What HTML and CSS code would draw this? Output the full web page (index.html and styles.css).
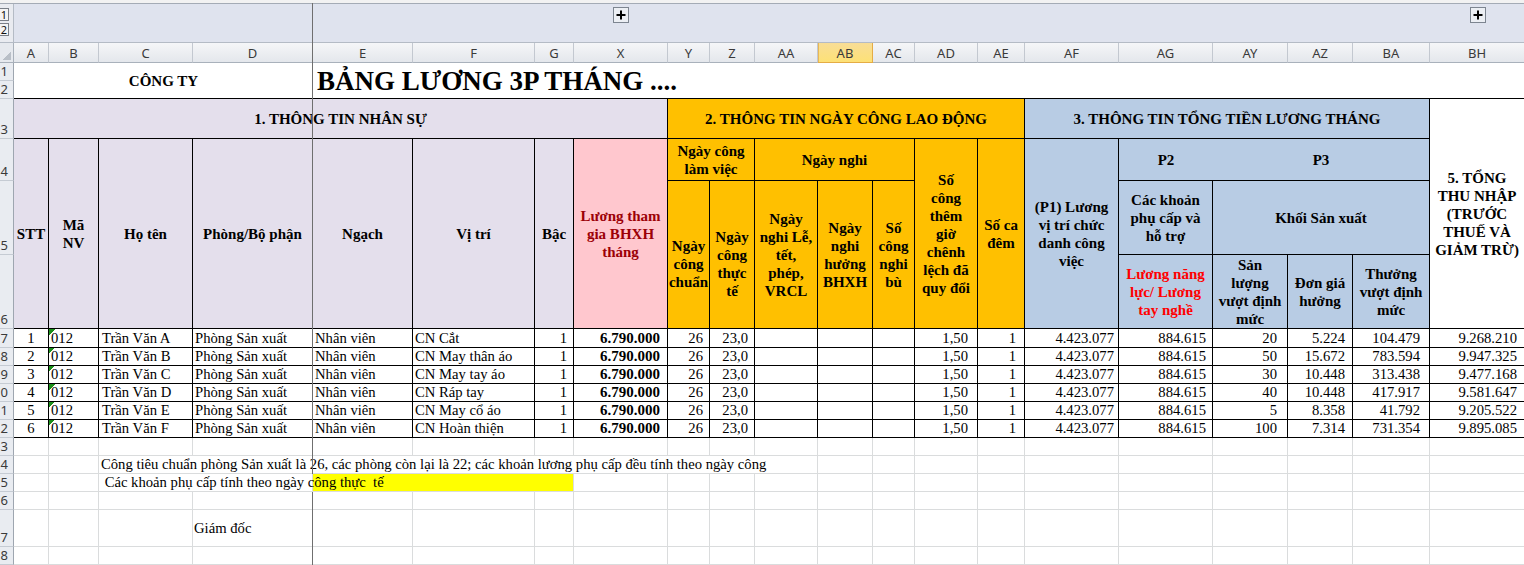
FILE: index.html
```html
<!DOCTYPE html>
<html lang="vi">
<head>
<meta charset="utf-8">
<title>Bảng lương 3P</title>
<link rel="stylesheet" href="styles.css">
</head>
<body>
<div class="sheet">
  <div class="tabs"></div>
  <div class="outline">
    <div class="levels"><span class="lvl">1</span><span class="lvl">2</span></div>
    <div class="plus px"><svg width="16" height="16" viewBox="0 0 16 16"><rect x="0.5" y="0.5" width="15" height="15" fill="#eceff4" stroke="#7d8590"/><path d="M3.5 8h9M8 3.5v9" stroke="#000" stroke-width="2"/></svg></div>
    <div class="plus ph"><svg width="16" height="16" viewBox="0 0 16 16"><rect x="0.5" y="0.5" width="15" height="15" fill="#eceff4" stroke="#7d8590"/><path d="M3.5 8h9M8 3.5v9" stroke="#000" stroke-width="2"/></svg></div>
  </div>
  <div class="colhdr">
    <div class="corner"></div>
    <div class="ch">A</div><div class="ch">B</div><div class="ch">C</div><div class="ch">D</div><div class="ch">E</div><div class="ch">F</div><div class="ch">G</div><div class="ch">X</div><div class="ch">Y</div><div class="ch">Z</div><div class="ch">AA</div><div class="ch sel">AB</div><div class="ch">AC</div><div class="ch">AD</div><div class="ch">AE</div><div class="ch">AF</div><div class="ch">AG</div><div class="ch">AY</div><div class="ch">AZ</div><div class="ch">BA</div><div class="ch">BH</div>
  </div>
  <div class="head">
    <div class="rh h1">1</div>
    <div class="rh h2">2</div>
    <div class="rh h3">3</div>
    <div class="rh h4">4</div>
    <div class="rh h5">5</div>
    <div class="rh h6">6</div>
    <div class="hc co">CÔNG TY</div>
    <div class="hc ti">BẢNG LƯƠNG 3P THÁNG ....</div>
    <div class="hc lav s1">1. THÔNG TIN NHÂN SỰ</div>
    <div class="hc org s2">2. THÔNG TIN NGÀY CÔNG LAO ĐỘNG</div>
    <div class="hc blu s3">3. THÔNG TIN TỔNG TIỀN LƯƠNG THÁNG</div>
    <div class="hc tn">5. TỔNG<br>THU NHẬP<br>(TRƯỚC<br>THUẾ VÀ<br>GIẢM TRỪ)</div>
    <div class="hc lav stt">STT</div>
    <div class="hc lav ma">Mã<br>NV</div>
    <div class="hc lav ht">Họ tên</div>
    <div class="hc lav pb">Phòng/Bộ phận</div>
    <div class="hc lav ngh">Ngạch</div>
    <div class="hc lav vt">Vị trí</div>
    <div class="hc lav bac">Bậc</div>
    <div class="hc bad lg">Lương tham<br>gia BHXH<br>tháng</div>
    <div class="hc org nclv">Ngày công<br>làm việc</div>
    <div class="hc org nn">Ngày nghi</div>
    <div class="hc org sc">Số<br>công<br>thêm<br>giờ<br>chênh<br>lệch đã<br>quy đổi</div>
    <div class="hc org scd">Số ca<br>đêm</div>
    <div class="hc blu p1">(P1) Lương<br>vị trí chức<br>danh công<br>việc</div>
    <div class="hc blu p2">P2</div>
    <div class="hc blu p3">P3</div>
    <div class="hc org ncc shift">Ngày<br>công<br>chuẩn</div>
    <div class="hc org nctt shift">Ngày<br>công<br>thực<br>tế</div>
    <div class="hc org nnl">Ngày<br>nghi Lễ,<br>tết,<br>phép,<br>VRCL</div>
    <div class="hc org nnb">Ngày<br>nghi<br>hưởng<br>BHXH</div>
    <div class="hc org scb">Số<br>công<br>nghi<br>bù</div>
    <div class="hc blu ckpc">Các khoản<br>phụ cấp và<br>hỗ trợ</div>
    <div class="hc blu kh">Khối Sản xuất</div>
    <div class="hc blu lnl">Lương năng<br>lực/ Lương<br>tay nghề</div>
    <div class="hc blu sl">Sản<br>lượng<br>vượt định<br>mức</div>
    <div class="hc blu dg">Đơn giá<br>hưởng</div>
    <div class="hc blu tv">Thưởng<br>vượt định<br>mức</div>
  </div>

  <div class="dr first">
    <div class="rh">7</div><div>1</div><div>012</div><div>Trần Văn A</div><div>Phòng Sản xuất</div><div>Nhân viên</div><div>CN Cắt</div><div>1</div><div>6.790.000</div><div>26</div><div>23,0</div><div></div><div></div><div></div><div>1,50</div><div>1</div><div>4.423.077</div><div>884.615</div><div>20</div><div>5.224</div><div>104.479</div><div>9.268.210</div>
  </div>
  <div class="dr">
    <div class="rh">8</div><div>2</div><div>012</div><div>Trần Văn B</div><div>Phòng Sản xuất</div><div>Nhân viên</div><div>CN May thân áo</div><div>1</div><div>6.790.000</div><div>26</div><div>23,0</div><div></div><div></div><div></div><div>1,50</div><div>1</div><div>4.423.077</div><div>884.615</div><div>50</div><div>15.672</div><div>783.594</div><div>9.947.325</div>
  </div>
  <div class="dr">
    <div class="rh">9</div><div>3</div><div>012</div><div>Trần Văn C</div><div>Phòng Sản xuất</div><div>Nhân viên</div><div>CN May tay áo</div><div>1</div><div>6.790.000</div><div>26</div><div>23,0</div><div></div><div></div><div></div><div>1,50</div><div>1</div><div>4.423.077</div><div>884.615</div><div>30</div><div>10.448</div><div>313.438</div><div>9.477.168</div>
  </div>
  <div class="dr">
    <div class="rh">10</div><div>4</div><div>012</div><div>Trần Văn D</div><div>Phòng Sản xuất</div><div>Nhân viên</div><div>CN Ráp tay</div><div>1</div><div>6.790.000</div><div>26</div><div>23,0</div><div></div><div></div><div></div><div>1,50</div><div>1</div><div>4.423.077</div><div>884.615</div><div>40</div><div>10.448</div><div>417.917</div><div>9.581.647</div>
  </div>
  <div class="dr">
    <div class="rh">11</div><div>5</div><div>012</div><div>Trần Văn E</div><div>Phòng Sản xuất</div><div>Nhân viên</div><div>CN May cổ áo</div><div>1</div><div>6.790.000</div><div>26</div><div>23,0</div><div></div><div></div><div></div><div>1,50</div><div>1</div><div>4.423.077</div><div>884.615</div><div>5</div><div>8.358</div><div>41.792</div><div>9.205.522</div>
  </div>
  <div class="dr">
    <div class="rh">12</div><div>6</div><div>012</div><div>Trần Văn F</div><div>Phòng Sản xuất</div><div>Nhân viên</div><div>CN Hoàn thiện</div><div>1</div><div>6.790.000</div><div>26</div><div>23,0</div><div></div><div></div><div></div><div>1,50</div><div>1</div><div>4.423.077</div><div>884.615</div><div>100</div><div>7.314</div><div>731.354</div><div>9.895.085</div>
  </div>

  <div class="br">
    <div class="rh">13</div><div></div><div></div><div></div><div></div><div></div><div></div><div></div><div></div><div></div><div></div><div></div><div></div><div></div><div></div><div></div><div></div><div></div><div></div><div></div><div></div><div></div>
  </div>
  <div class="br">
    <div class="rh">14</div><div></div><div></div><div class="note14">Công tiêu chuẩn phòng Sản xuất là 26, các phòng còn lại là 22; các khoản lương phụ cấp đều tính theo ngày công</div><div></div><div></div><div></div><div></div><div></div><div></div><div></div><div></div><div></div><div></div><div></div>
  </div>
  <div class="br">
    <div class="rh">15</div><div></div><div></div><div class="note15"> Các khoản phụ cấp tính theo ngày công thực  tế</div><div class="yel"></div><div></div><div></div><div></div><div></div><div></div><div></div><div></div><div></div><div></div><div></div><div></div><div></div><div></div><div></div>
  </div>
  <div class="br">
    <div class="rh">16</div><div></div><div></div><div></div><div></div><div></div><div></div><div></div><div></div><div></div><div></div><div></div><div></div><div></div><div></div><div></div><div></div><div></div><div></div><div></div><div></div><div></div>
  </div>
  <div class="br tall">
    <div class="rh">17</div><div></div><div></div><div></div><div class="sign">Giám đốc</div><div></div><div></div><div></div><div></div><div></div><div></div><div></div><div></div><div></div><div></div><div></div><div></div><div></div><div></div><div></div><div></div><div></div>
  </div>
  <div class="br">
    <div class="rh">18</div><div></div><div></div><div></div><div></div><div></div><div></div><div></div><div></div><div></div><div></div><div></div><div></div><div></div><div></div><div></div><div></div><div></div><div></div><div></div><div></div><div></div>
  </div>

  <div class="freeze"></div>
</div>
</body>
</html>
```

FILE: styles.css
```css
:root {
  --cols: 14px 35px 50px 94px 120px 100px 122px 39px 94px 42px 45px 63px 55px 42px 63px 47px 94px 94px 75px 65px 77px 95px;
}
* { box-sizing: border-box; }
html, body { margin: 0; padding: 0; }
body {
  width: 1524px;
  height: 565px;
  overflow: hidden;
  background: #fff;
  font-family: "Liberation Serif", "Times New Roman", serif;
  font-size: 14.67px;
  color: #000;
}
.sheet { position: relative; width: 1525px; height: 565px; }

/* ---------- outline strip ---------- */
.tabs { height: 3px; background: #f2f2f2; }
.outline {
  display: grid;
  grid-template-columns: var(--cols);
  height: 40px;
  background: #dfe3ee;
  border-top: 1px solid #a4abb5;
  border-bottom: 1px solid #b4bbc5;
}
.levels {
  display: flex;
  flex-direction: column;
  gap: 2px;
  padding-top: 4px;
  background: #e9ebf0;
  border-right: 1px solid #b4bbc5;
  overflow: hidden;
}
.lvl {
  display: flex;
  align-items: center;
  justify-content: center;
  width: 10px;
  height: 13px;
  margin-left: -1px;
  border: 1px solid #7a7f87;
  background: #f4f4f4;
  font: 11px/1 "Noto Sans", sans-serif;
  color: #111;
}
.plus { align-self: start; justify-self: center; margin-top: 3px; height: 16px; }
.plus svg { display: block; }
.px { grid-column: 9; }
.ph { grid-column: 22; }

/* ---------- column header ---------- */
.colhdr { display: grid; grid-template-columns: var(--cols); height: 20px; }
.ch {
  display: flex;
  align-items: center;
  justify-content: center;
  background: linear-gradient(#f5f6f8, #e4e7ec);
  border-right: 1px solid #c3c8d0;
  border-bottom: 1px solid #a9b1bb;
  font: 13px "Noto Sans", sans-serif;
  color: #3a3a3a;
}
.ch.sel {
  background: linear-gradient(#f8dd96, #fde176);
  border-right-color: #e5ac45;
  border-bottom-color: #e5ac45;
  box-shadow: inset 1px 0 #e9b855;
}
.corner {
  background: linear-gradient(135deg, transparent 50%, #b9bfc7 50%) no-repeat right 2px bottom 2px / 8px 8px, #e6e9ee;
  border-right: 1px solid #a9b1bb;
  border-bottom: 1px solid #a9b1bb;
}

/* ---------- row header ---------- */
.rh {
  display: flex;
  justify-content: flex-end;
  align-items: flex-end;
  padding: 0 5px 1px 0;
  overflow: hidden;
  white-space: nowrap;
  background: #e9ecf1;
  border-right: 1px solid #9ea6b0;
  border-bottom: 1px solid #c5cbd3;
  font: 13px/16px "Noto Sans", sans-serif;
  color: #3a3a3a;
}

/* ---------- heading block (rows 1-6) ---------- */
.head {
  display: grid;
  grid-template-columns: var(--cols);
  grid-template-rows: 18px 18px 40px 42px 74px 74px;
  grid-template-areas:
    "h1 co co co co ti ti ti ti ti ti ti ti ti ti ti ti ti ti ti ti ti"
    "h2 co co co co ti ti ti ti ti ti ti ti ti ti ti ti ti ti ti ti ti"
    "h3 s1 s1 s1 s1 s1 s1 s1 s1 s2 s2 s2 s2 s2 s2 s2 s3 s3 s3 s3 s3 tn"
    "h4 stt ma ht pb ngh vt bac lg nclv nclv nn nn nn sc scd p1 p2 p3 p3 p3 tn"
    "h5 stt ma ht pb ngh vt bac lg ncc nctt nnl nnb scb sc scd p1 ckpc kh kh kh tn"
    "h6 stt ma ht pb ngh vt bac lg ncc nctt nnl nnb scb sc scd p1 lnl sl dg tv tn";
}
.h1 { grid-area: h1; } .h2 { grid-area: h2; } .h3 { grid-area: h3; }
.h4 { grid-area: h4; } .h5 { grid-area: h5; } .h6 { grid-area: h6; }
.co { grid-area: co; } .ti { grid-area: ti; }
.s1 { grid-area: s1; } .s2 { grid-area: s2; } .s3 { grid-area: s3; } .tn { grid-area: tn; }
.stt { grid-area: stt; } .ma { grid-area: ma; } .ht { grid-area: ht; } .pb { grid-area: pb; }
.ngh { grid-area: ngh; } .vt { grid-area: vt; } .bac { grid-area: bac; } .lg { grid-area: lg; }
.nclv { grid-area: nclv; } .nn { grid-area: nn; } .sc { grid-area: sc; } .scd { grid-area: scd; }
.p1 { grid-area: p1; } .p2 { grid-area: p2; } .p3 { grid-area: p3; }
.ncc { grid-area: ncc; } .nctt { grid-area: nctt; } .nnl { grid-area: nnl; } .nnb { grid-area: nnb; }
.scb { grid-area: scb; } .ckpc { grid-area: ckpc; } .kh { grid-area: kh; } .lnl { grid-area: lnl; }
.sl { grid-area: sl; } .dg { grid-area: dg; } .tv { grid-area: tv; }

.hc {
  display: flex;
  align-items: center;
  justify-content: center;
  text-align: center;
  font-size: 15px;
  font-weight: bold;
  line-height: 18px;
  white-space: nowrap;
  overflow: hidden;
  border-right: 1px solid #000;
  border-bottom: 1px solid #000;
}
.co, .ti { border-right: 0; }
.ti { justify-content: flex-start; padding-left: 4px; font-size: 27px; line-height: 30px; }
.p2 { border-right: 0; }
.shift { padding-top: 18px; }
.lav { background: #e4dfec; }
.org { background: #ffc000; }
.blu { background: #b8cce4; }
.bad { background: #ffc7ce; color: #9c0006; }
.lnl { color: #ff0000; }

/* ---------- data rows ---------- */
.dr { display: grid; grid-template-columns: var(--cols); height: 18px; }
.dr.first { height: 19px; }
.dr > div:not(.rh) {
  display: flex;
  align-items: center;
  white-space: nowrap;
  overflow: hidden;
  line-height: 17px;
  border-right: 1px solid #000;
  border-bottom: 1px solid #000;
}
.dr > :nth-child(2) { justify-content: center; }
.dr > :nth-child(3) {
  padding-left: 2px;
  background: linear-gradient(135deg, #1b8f1b 50%, transparent 50%) no-repeat 0 0 / 6px 6px;
}
.dr > :nth-child(4) { padding-left: 3px; }
.dr > :nth-child(5), .dr > :nth-child(6), .dr > :nth-child(7) { padding-left: 2px; }
.dr > :nth-child(n+8) { justify-content: flex-end; }
.dr > :nth-child(8) { padding-right: 6px; }
.dr > :nth-child(9) { padding-right: 7px; font-weight: bold; font-size: 15px; }
.dr > :nth-child(10), .dr > :nth-child(11) { padding-right: 6px; }
.dr > :nth-child(15) { padding-right: 9px; }
.dr > :nth-child(16) { padding-right: 8px; }
.dr > :nth-child(17) { padding-right: 4px; }
.dr > :nth-child(18) { padding-right: 6px; }
.dr > :nth-child(19) { padding-right: 10px; }
.dr > :nth-child(20) { padding-right: 7px; }
.dr > :nth-child(21) { padding-right: 9px; }
.dr > :nth-child(22) { padding-right: 7px; }

/* ---------- lower rows ---------- */
.br { display: grid; grid-template-columns: var(--cols); height: 18px; }
.br.tall { height: 37px; }
.br > div:not(.rh) {
  display: flex;
  align-items: center;
  white-space: nowrap;
  border-right: 1px solid #dadcdd;
  border-bottom: 1px solid #dadcdd;
}
.note14 { grid-column: 4 / 13; padding-left: 2px; }
.note15 { grid-column: 4 / 6; padding-left: 2px; white-space: pre !important; z-index: 1; overflow: visible; }
.yel { grid-column: 6 / 9; background: #ffff00; }
.sign { padding-left: 1px; }

/* frozen-pane divider drawn over the grid */
.freeze {
  position: absolute;
  left: 312px;
  top: 3px;
  bottom: 0;
  width: 1px;
  background: #6f6f6f;
}
```
